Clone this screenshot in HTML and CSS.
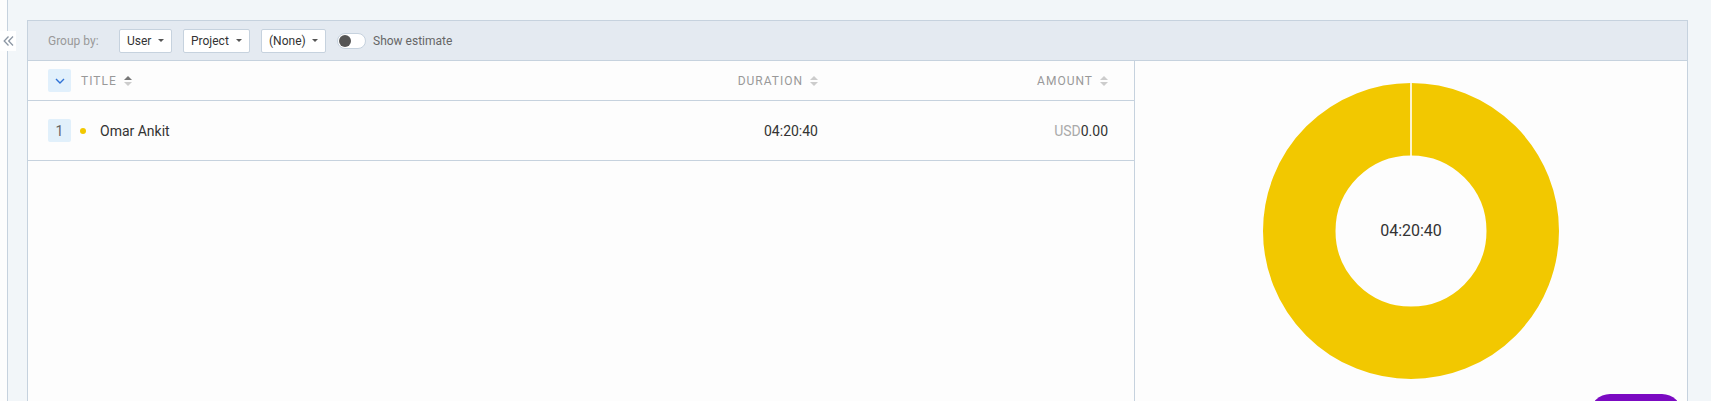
FILE: index.html
```html
<!DOCTYPE html>
<html lang="en">
<head>
<meta charset="utf-8">
<title>Report</title>
<link rel="stylesheet" href="styles.css">
</head>
<body>
<div class="page">
  <div class="rail"></div>
  <button class="collapse" aria-label="Collapse">
    <svg width="11" height="10" viewBox="0 0 11 10"><path d="M5.5 0.5 L1.2 5 L5.5 9.5 M10 0.5 L5.7 5 L10 9.5" fill="none" stroke="#8c97a4" stroke-width="1.3"/></svg>
  </button>
  <main class="main">
    <section class="card">
      <div class="toolbar">
        <span class="group-label">Group by:</span>
        <div class="select w-user"><span>User</span><i class="caret"></i></div>
        <div class="select w-project"><span>Project</span><i class="caret"></i></div>
        <div class="select w-none"><span>(None)</span><i class="caret"></i></div>
        <span class="toggle"><i class="knob"></i></span>
        <span class="toggle-label">Show estimate</span>
      </div>
      <div class="body">
        <div class="table">
          <div class="trow thead">
            <div class="cell title-cell">
              <span class="expand">
                <svg width="10" height="6" viewBox="0 0 10 6"><path d="M1 1 L5 5 L9 1" fill="none" stroke="#2f72d6" stroke-width="1.4"/></svg>
              </span>
              <span class="th">TITLE</span>
              <span class="sort active"><i class="up"></i><i class="down"></i></span>
            </div>
            <div class="cell right"><span class="th">DURATION</span><span class="sort"><i class="up"></i><i class="down"></i></span></div>
            <div class="cell right"><span class="th">AMOUNT</span><span class="sort"><i class="up"></i><i class="down"></i></span></div>
          </div>
          <div class="trow tdata">
            <div class="cell title-cell">
              <span class="num">1</span>
              <span class="dot"></span>
              <span class="name">Omar Ankit</span>
            </div>
            <div class="cell right value">04:20:40</div>
            <div class="cell right value"><span class="cur">USD</span>0.00</div>
          </div>
        </div>
        <div class="chart">
          <div class="donut">
            <svg width="296" height="296" viewBox="0 0 296 296">
              <circle cx="148" cy="148" r="111.75" fill="none" stroke="#f2c800" stroke-width="72.5"/>
              <line x1="148" y1="0" x2="148" y2="74" stroke="#ffffff" stroke-width="1.6"/>
            </svg>
            <span class="donut-label">04:20:40</span>
          </div>
        </div>
      </div>
    </section>
  </main>
  <div class="fab"></div>
</div>
</body>
</html>
```
FILE: styles.css
```css
html, body {
  margin: 0;
  padding: 0;
  height: 401px;
  overflow: hidden;
}
body {
  background: #f2f6f9;
  font-family: Roboto, "Liberation Sans", Arial, sans-serif;
  color: #333;
}
.page {
  display: flex;
  position: relative;
  min-height: 401px;
}
.rail {
  width: 7px;
  background: #fdfdfd;
  border-right: 1px solid #c6d2de;
  flex: none;
}
.collapse {
  position: absolute;
  left: 0;
  top: 31px;
  width: 16px;
  height: 20px;
  padding: 0;
  border: 0;
  background: #fff;
  display: flex;
  align-items: center;
  justify-content: center;
}
.main {
  flex: 1;
  padding: 20px 23px 0 19px;
}
.card {
  border: 1px solid #c6d2de;
  background: #fdfdfd;
  min-height: 382px;
  box-sizing: border-box;
  display: flex;
  flex-direction: column;
}
.toolbar {
  height: 39px;
  background: #e4eaf1;
  border-bottom: 1px solid #c6d2de;
  display: flex;
  align-items: center;
  padding: 0 20px;
  font-size: 12px;
}
.group-label {
  color: #999;
  width: 71px;
}
.select {
  height: 22px;
  border: 1px solid #c6d2de;
  background: #fff;
  border-radius: 2px;
  display: flex;
  align-items: center;
  justify-content: space-between;
  padding: 0 7px 0 7px;
  color: #333;
  margin-right: 11px;
  box-sizing: content-box;
}
.w-user { width: 37px; }
.w-project { width: 51px; }
.w-none { width: 49px; }
.caret {
  width: 0;
  height: 0;
  border-left: 3px solid transparent;
  border-right: 3px solid transparent;
  border-top: 3px solid #555;
}
.toggle {
  width: 26px;
  height: 14px;
  border: 1px solid #c6d2de;
  border-radius: 8px;
  background: #fff;
  display: flex;
  align-items: center;
  padding-left: 1px;
  box-sizing: content-box;
}
.knob {
  width: 12px;
  height: 12px;
  border-radius: 50%;
  background: #555;
}
.toggle-label {
  color: #666;
  margin-left: 7px;
}
.body {
  flex: 1;
  display: flex;
}
.table {
  width: 1106px;
  border-right: 1px solid #c6d2de;
  flex: none;
}
.trow {
  display: grid;
  grid-template-columns: 1fr 200px 290px;
  align-items: center;
  padding: 0 26px 0 20px;
  border-bottom: 1px solid #c6d2de;
}
.thead { height: 39px; }
.tdata { height: 59px; }
.cell {
  display: flex;
  align-items: center;
}
.right { justify-content: flex-end; }
.expand {
  width: 23px;
  height: 23px;
  background: #e1f0fc;
  border-radius: 2px;
  display: flex;
  align-items: center;
  justify-content: center;
  margin-right: 10px;
}
.th {
  font-size: 12px;
  letter-spacing: 1px;
  color: #999;
}
.sort {
  display: inline-flex;
  flex-direction: column;
  gap: 2px;
  margin-left: 7px;
}
.sort i {
  width: 0;
  height: 0;
  border-left: 4px solid transparent;
  border-right: 4px solid transparent;
}
.sort .up { border-bottom: 4px solid #ccc; }
.sort .down { border-top: 4px solid #ccc; }
.sort.active .up { border-bottom-color: #777; }
.num {
  width: 23px;
  height: 23px;
  background: #e1f0fb;
  border-radius: 2px;
  display: flex;
  align-items: center;
  justify-content: center;
  font-size: 14px;
  color: #666;
  margin-right: 9px;
}
.dot {
  width: 6px;
  height: 6px;
  border-radius: 50%;
  background: #f2c800;
  margin-right: 14px;
}
.name {
  font-size: 14px;
  color: #333;
}
.value {
  font-size: 14px;
  color: #333;
}
.cur { color: #aaa; }
.chart {
  flex: 1;
  display: flex;
  justify-content: center;
  padding-top: 22px;
}
.donut {
  position: relative;
  width: 296px;
  height: 296px;
}
.donut svg { display: block; }
.donut-label {
  position: absolute;
  left: 0;
  right: 0;
  top: 138px;
  text-align: center;
  font-size: 16px;
  color: #333;
}
.fab {
  position: absolute;
  left: 1590px;
  top: 394px;
  width: 92px;
  height: 40px;
  border-radius: 20px;
  background: #7b0ac2;
}
```
